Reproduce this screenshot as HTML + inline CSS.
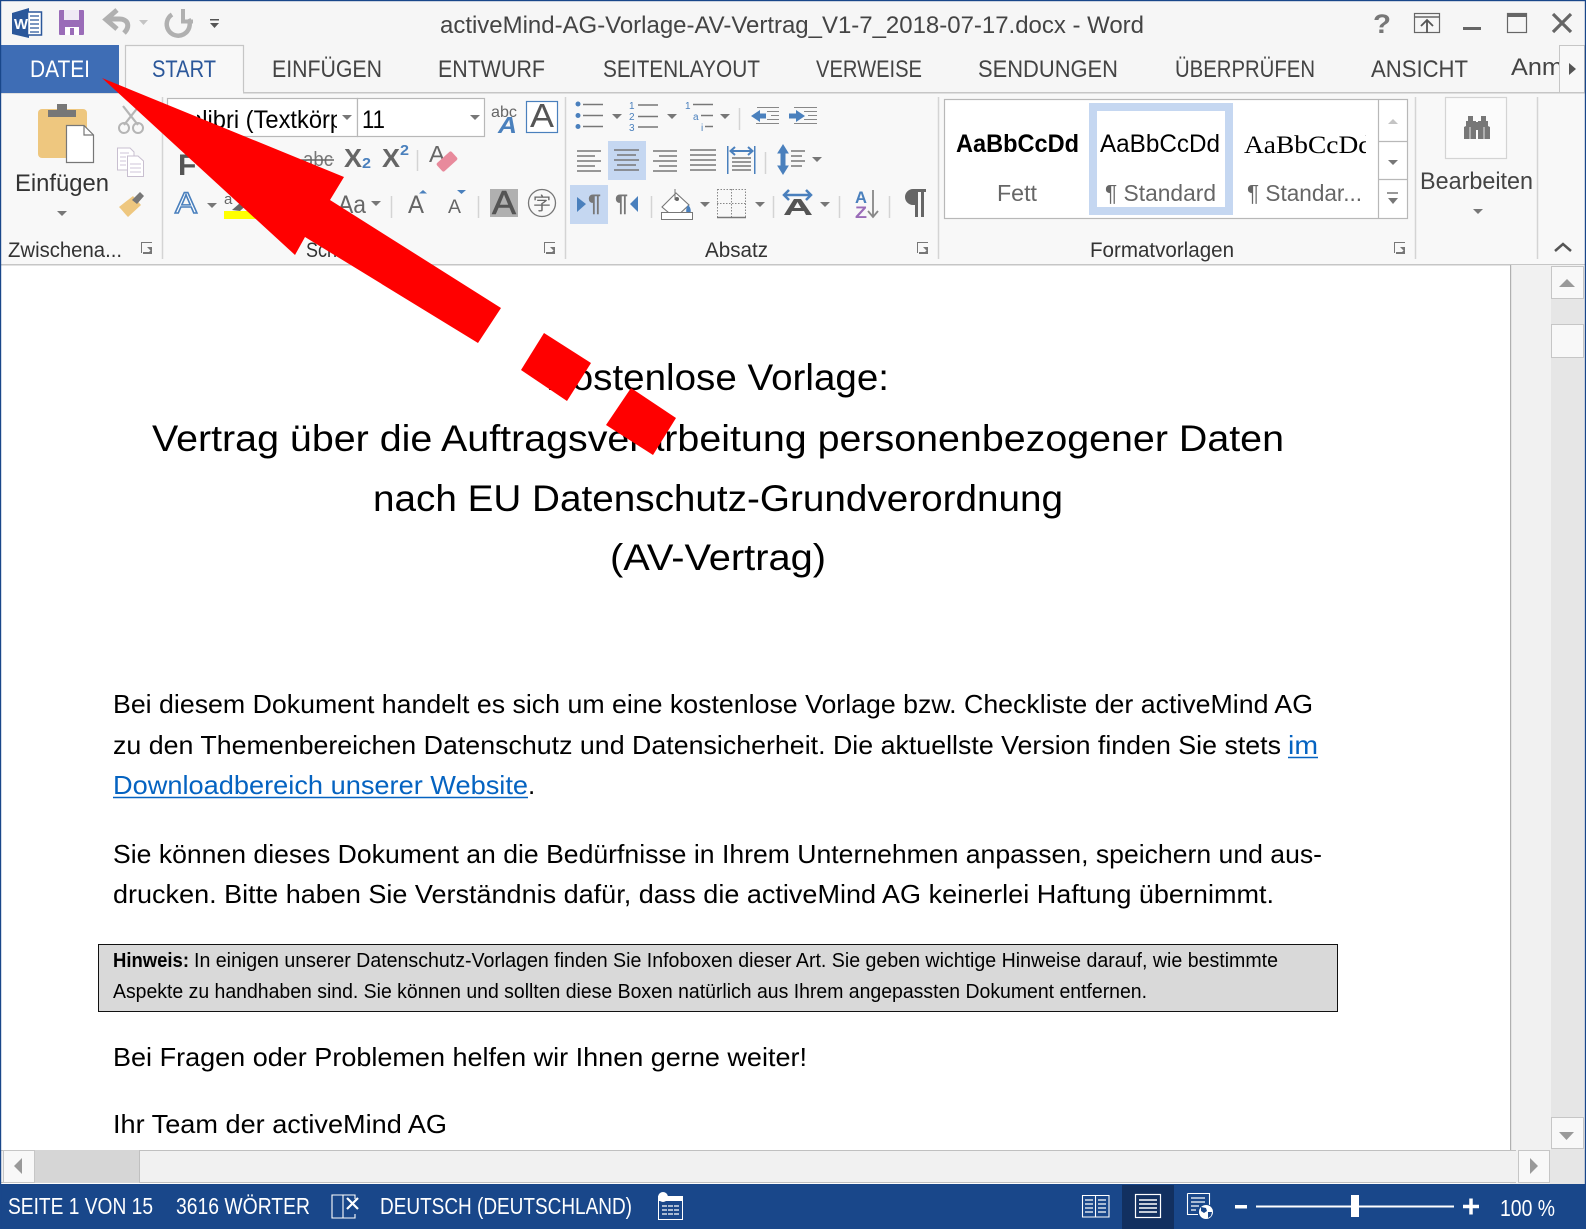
<!DOCTYPE html>
<html lang="de"><head><meta charset="utf-8"><title>activeMind-AG-Vorlage-AV-Vertrag - Word</title>
<style>
html,body{margin:0;padding:0;background:#fff;width:1586px;height:1229px;overflow:hidden}
svg{display:block}
text{font-family:"Liberation Sans",sans-serif;white-space:pre}
.t{font-size:24px;fill:#444}
.g{font-size:21px;fill:#333}
.d{font-size:37px;fill:#000}
.b{font-size:26px;fill:#000}
.h{font-size:20px;fill:#000}
.s{font-size:23px;fill:#fff}
.ln{stroke:#777;stroke-width:1.5;fill:none}
.lt{stroke:#888;stroke-width:1;fill:none}
.bl{fill:#4a80bd}
.dr{fill:#777}
.sep{stroke:#d4d4d4;stroke-width:1.5}
</style></head><body>
<svg width="1586" height="1229" viewBox="0 0 1586 1229" xmlns="http://www.w3.org/2000/svg">
<defs>
<clipPath id="c1"><rect x="197" y="98" width="140" height="38"/></clipPath>
<clipPath id="c2"><rect x="1240" y="120" width="126" height="50"/></clipPath>
</defs>
<rect width="1586" height="1229" fill="#fff"/>
<!-- chrome -->
<rect width="1586" height="93" fill="#f6f6f6"/>
<rect y="93" width="1586" height="172" fill="#f8f8f8"/>
<rect y="92" width="1586" height="1.5" fill="#c6c6c6"/>
<rect y="264" width="1586" height="1.5" fill="#c6c6c6"/>
<!-- QAT -->
<path d="M12 13 29 8V38L12 34Z" fill="#2b579a"/>
<rect x="27.5" y="12" width="14" height="23" fill="#fff" stroke="#2b579a" stroke-width="1.5"/>
<path d="M30 16h9M30 20h9M30 24h9M30 28h9M30 32h9" stroke="#2b579a" stroke-width="1.3"/>
<text x="14" y="29" font-size="15" font-weight="bold" fill="#fff" textLength="14" lengthAdjust="spacingAndGlyphs">W</text>
<rect x="59" y="10" width="25" height="25" rx="1" fill="#9a6cb8"/>
<rect x="64" y="10" width="15" height="10" fill="#efe9f5"/>
<rect x="65" y="27" width="14" height="8" fill="#fff"/>
<rect x="70" y="28" width="4" height="7" fill="#9a6cb8"/>
<path d="M124 33C130 27 129 19 119 19H108" fill="none" stroke="#b0b0b0" stroke-width="5"/>
<path d="M117 10 106 19.500 117 29" fill="none" stroke="#b0b0b0" stroke-width="5"/>
<path d="M139 20h9l-4.500 5z" fill="#c4c4c4"/>
<path d="M172 14.500A11.500 11.500 0 1 0 188.500 19" fill="none" stroke="#b0b0b0" stroke-width="4.500"/>
<path d="M183 9V21.500H193" fill="none" stroke="#b0b0b0" stroke-width="4"/>
<rect x="210" y="19" width="9" height="1.500" fill="#555"/>
<path d="M210 23h9l-4.500 5z" fill="#555"/>
<!-- Title -->
<text x="440" y="33" font-size="24" fill="#444" textLength="704" lengthAdjust="spacingAndGlyphs">activeMind-AG-Vorlage-AV-Vertrag_V1-7_2018-07-17.docx - Word</text>
<text x="1373" y="33" font-size="27" font-weight="bold" fill="#777" textLength="18" lengthAdjust="spacingAndGlyphs">?</text>
<rect x="1414.500" y="13.500" width="25" height="19" fill="none" stroke="#666" stroke-width="1.200"/>
<path d="M1414 17h26" stroke="#666" stroke-width="1.500"/>
<path d="M1427 33V21M1421 26l6-6 6 6" fill="none" stroke="#555" stroke-width="1.800"/>
<rect x="1463" y="27" width="18" height="3" fill="#666"/>
<rect x="1507.500" y="13.500" width="19" height="19" fill="none" stroke="#666" stroke-width="1.200"/>
<rect x="1507" y="13" width="20" height="4" fill="#666"/>
<path d="M1553 14 1571 32M1571 14 1553 32" stroke="#666" stroke-width="3.200"/>
<!-- Tabs -->
<rect x="1" y="45" width="118" height="48" fill="#3e6db5"/>
<path d="M125.500 93V45.500H243.500V93" fill="#f8f8f8" stroke="#c6c6c6" stroke-width="1.200"/>
<rect x="126" y="91" width="117" height="3" fill="#f8f8f8"/>
<text class="t" style="fill:#fff" x="30" y="77" textLength="60" lengthAdjust="spacingAndGlyphs">DATEI</text>
<text class="t" style="fill:#2b579a" x="152" y="77" textLength="64" lengthAdjust="spacingAndGlyphs">START</text>
<text class="t" x="272" y="77" textLength="110" lengthAdjust="spacingAndGlyphs">EINFÜGEN</text>
<text class="t" x="438" y="77" textLength="107" lengthAdjust="spacingAndGlyphs">ENTWURF</text>
<text class="t" x="603" y="77" textLength="157" lengthAdjust="spacingAndGlyphs">SEITENLAYOUT</text>
<text class="t" x="816" y="77" textLength="106" lengthAdjust="spacingAndGlyphs">VERWEISE</text>
<text class="t" x="978" y="77" textLength="140" lengthAdjust="spacingAndGlyphs">SENDUNGEN</text>
<text class="t" x="1175" y="77" textLength="140" lengthAdjust="spacingAndGlyphs">ÜBERPRÜFEN</text>
<text class="t" x="1371" y="77" textLength="97" lengthAdjust="spacingAndGlyphs">ANSICHT</text>
<text class="t" x="1511" y="75" textLength="52" lengthAdjust="spacingAndGlyphs">Anm</text>
<rect x="1559.500" y="45.500" width="25" height="47" fill="#f8f8f8" stroke="#c6c6c6" stroke-width="1"/>
<path d="M1569 63l7 6-7 6z" fill="#555"/>
<!-- Clipboard group -->
<path d="M38 113a4 4 0 0 1 4-4H83a4 4 0 0 1 4 4V158H42a4 4 0 0 1-4-4z" fill="#eec77f"/>
<path d="M48 117V110H57V104H67V110H76V117z" fill="#777"/>
<path d="M66.500 125.500H84L93.500 135V162.500H66.500z" fill="#fff" stroke="#777" stroke-width="1.200"/>
<path d="M84 125.500V135H93.500" fill="none" stroke="#777" stroke-width="1.200"/>
<text class="g" style="font-size:24px" x="15" y="191" textLength="94" lengthAdjust="spacingAndGlyphs">Einfügen</text>
<path d="M57 211h10l-5 5z" class="dr"/>
<path d="M123 106 138 125M139 106 124 125" stroke="#b5b5b5" stroke-width="2.200"/>
<circle cx="124" cy="128" r="5" fill="none" stroke="#b5b5b5" stroke-width="2"/>
<circle cx="138" cy="128" r="5" fill="none" stroke="#b5b5b5" stroke-width="2"/>
<path d="M117.500 148H130L134 152V170H117.500z" fill="#fff" stroke="#c8bfd0"/>
<path d="M127.500 156H138L143.500 161V176.500H127.500z" fill="#fff" stroke="#c8bfd0"/>
<path d="M120 153h9M120 157h6M120 161h6M120 165h6M130 164h11M130 168h11M130 172h11" stroke="#cfc6d8"/>
<path d="M119 207 133 196 141 205 128 217C125 214 122 210 119 207Z" fill="#eec77f"/>
<path d="M132 200 140 192 144 196 137 204z" fill="#777"/>
<text class="g" x="8" y="257" textLength="114" lengthAdjust="spacingAndGlyphs">Zwischena...</text>
<path d="M141 242h11v1h-10v10h-1zM147 247l5 5v-5zM149 252h-6v2h9v-5z" fill="#777"/>
<path class="sep" d="M162.500 97V259"/>
<!-- Font group -->
<rect x="167.500" y="98.500" width="190" height="38" fill="#fff" stroke="#b8b8b8" stroke-width="1.200"/>
<rect x="357.500" y="98.500" width="127" height="38" fill="#fff" stroke="#b8b8b8" stroke-width="1.200"/>
<text clip-path="url(#c1)" x="172" y="128" font-size="25" fill="#000" textLength="200" lengthAdjust="spacingAndGlyphs">Calibri (Textkörper)</text>
<path d="M342 115h10l-5 5z" class="dr"/>
<text x="362" y="128" font-size="25" fill="#000" textLength="23" lengthAdjust="spacingAndGlyphs">11</text>
<path d="M470 115h10l-5 5z" class="dr"/>
<text x="491" y="117" font-size="16" fill="#666" textLength="26" lengthAdjust="spacingAndGlyphs">abc</text>
<text x="498" y="133" font-size="23" font-weight="bold" font-style="italic" fill="#4a80bd" textLength="19" lengthAdjust="spacingAndGlyphs">A</text>
<rect x="526.500" y="101.500" width="31" height="31" fill="#fff" stroke="#4a80bd" stroke-width="1.200"/>
<text x="530" y="127" font-size="33" fill="#555" textLength="24" lengthAdjust="spacingAndGlyphs">A</text>
<text x="178" y="175" font-size="30" font-weight="bold" fill="#555">F</text>
<text x="303" y="166" font-size="20" fill="#777" textLength="30" lengthAdjust="spacingAndGlyphs">abc</text>
<path d="M301 160h33" stroke="#666" stroke-width="1.500"/>
<text x="344" y="167" font-size="26" font-weight="bold" fill="#666" textLength="18" lengthAdjust="spacingAndGlyphs">X</text>
<text x="362" y="168" font-size="15" font-weight="bold" fill="#4a80bd" textLength="9" lengthAdjust="spacingAndGlyphs">2</text>
<text x="382" y="167" font-size="26" font-weight="bold" fill="#666" textLength="18" lengthAdjust="spacingAndGlyphs">X</text>
<text x="400" y="155" font-size="15" font-weight="bold" fill="#4a80bd" textLength="9" lengthAdjust="spacingAndGlyphs">2</text>
<path class="sep" d="M417.500 150V171"/>
<text x="429" y="162" font-size="23" fill="#666" textLength="16" lengthAdjust="spacingAndGlyphs">A</text>
<rect x="437" y="156" width="20" height="11" rx="2" fill="#e88a9c" transform="rotate(-42 447 161.500)"/>
<text x="175" y="213" font-size="30" fill="#fff" stroke="#4a80bd" stroke-width="1.500" textLength="22" lengthAdjust="spacingAndGlyphs">A</text>
<path d="M207 203h10l-5 5z" class="dr"/>
<text x="224" y="204" font-size="15" fill="#666" textLength="12">a</text>
<path d="M232 210 248 196 252 200 240 211z" fill="#666"/>
<rect x="224" y="211" width="36" height="8" fill="#ffff00"/>
<text x="338" y="213" font-size="25" fill="#666" textLength="28" lengthAdjust="spacingAndGlyphs">Aa</text>
<path d="M371 201h10l-5 5z" class="dr"/>
<path class="sep" d="M391.500 196V218"/>
<text x="408" y="213" font-size="25" fill="#666" textLength="16" lengthAdjust="spacingAndGlyphs">A</text>
<path d="M423 190l4 3.500h-8z" class="bl"/>
<text x="448" y="213" font-size="19" fill="#666" textLength="13" lengthAdjust="spacingAndGlyphs">A</text>
<path d="M457 190h9l-4.500 4z" class="bl"/>
<path class="sep" d="M478.500 196V218"/>
<rect x="490" y="189" width="28" height="28" fill="#b0b0b0"/>
<text x="492" y="214" font-size="33" fill="#555" stroke="#555" stroke-width=".6" textLength="24" lengthAdjust="spacingAndGlyphs">A</text>
<circle cx="542" cy="203" r="13.500" fill="none" stroke="#777" stroke-width="1.300"/>
<text x="533" y="210" font-size="18" fill="#666" style="font-family:'Liberation Sans','Noto Sans CJK SC',sans-serif">字</text>
<text class="g" x="306" y="257" textLength="72" lengthAdjust="spacingAndGlyphs">Schriftart</text>
<path d="M544 242h11v1h-10v10h-1zM550 247l5 5v-5zM552 252h-6v2h9v-5z" fill="#777"/>
<path class="sep" d="M565.500 97V259"/>
<!-- Paragraph group -->
<g class="bl"><circle cx="578" cy="104" r="2.500"/><circle cx="578" cy="115.500" r="2.500"/><circle cx="578" cy="126.500" r="2.500"/></g>
<path class="ln" d="M583 104.500h20M583 115.500h20M583 126.500h20"/>
<path d="M612 114h10l-5 5z" class="dr"/>
<g font-size="10" fill="#4a80bd"><text x="629" y="109">1</text><text x="629" y="120">2</text><text x="629" y="131">3</text></g>
<path class="ln" d="M638 105h20M638 116.500h20M638 127h20"/>
<path d="M667 114h10l-5 5z" class="dr"/>
<g font-size="10" fill="#4a80bd"><text x="685" y="109">1</text><text x="693" y="120">a</text><text x="701" y="131">i</text></g>
<path class="ln" d="M693 104.500h20M701 115.500h12M705 126.500h8"/>
<path d="M720 114h10l-5 5z" class="dr"/>
<path class="sep" d="M739.500 108V130"/>
<path class="lt" d="M757 107.500h22M767 111.500h12M771 115.500h8M767 119.500h12M756 123.500h23"/>
<path d="M751 116 760 110V113.500H766V118.500H760V122z" class="bl"/>
<path class="lt" d="M794 107.500h23M804 111.500h13M808 115.500h9M804 119.500h13M794 123.500h23"/>
<path d="M805 116 796 110V113.500H789V118.500H796V122z" class="bl"/>
<rect x="608" y="141" width="38" height="39" fill="#c5d7f1"/>
<path class="ln" d="M577 151h24M577 156h18M577 161h24M577 166h18M577 171h24"/>
<path class="ln" d="M614 150h25M617 155h19M614 160h25M617 165h19M614 170h25"/>
<path class="ln" d="M653 151h24M659 156h18M653 161h24M659 166h18M653 171h24"/>
<path class="ln" d="M690 150h26M690 155h26M690 160h26M690 165h26M690 170h26"/>
<path class="bl" d="M727 146h1.500v28H727zM754 146h1.500v28H754z"/>
<path class="ln" d="M732 158h19M732 162h19M732 166h19M732 170h19"/>
<path d="M731 151h21M735 147l-4.500 4 4.500 4M748 147l4.500 4-4.500 4" fill="none" stroke="#4a80bd" stroke-width="2"/>
<path class="sep" d="M765.500 152V174"/>
<path class="bl" d="M783 145 778 153H781V166H778L783 174 788 166H785V153H788z" stroke="#4a80bd"/>
<path class="ln" d="M791 151h14M791 156h11M791 161h14M791 166h11"/>
<path d="M812 157h10l-5 5z" class="dr"/>
<rect x="570" y="185" width="38" height="39" fill="#c5d7f1"/>
<path class="bl" d="M577 197 586 204 577 212z"/>
<text x="588" y="211" font-size="24" font-weight="bold" fill="#777" textLength="13" lengthAdjust="spacingAndGlyphs">¶</text>
<text x="615" y="211" font-size="24" font-weight="bold" fill="#777" textLength="13" lengthAdjust="spacingAndGlyphs">¶</text>
<path class="bl" d="M638 196 630 204 638 212z"/>
<path class="sep" d="M651.500 196V218"/>
<path d="M662 207 676 193 689 205 675 218z" fill="#fff" stroke="#777" stroke-width="1.100"/>
<path d="M675 189V200" stroke="#777"/><circle cx="677" cy="199" r="2" fill="#666"/>
<path d="M688 205c4 3 3 9 1 12-3-2-4-8-1-12z" class="bl"/>
<rect x="661.500" y="212.500" width="31" height="7" fill="#fff" stroke="#777" stroke-width="1"/>
<path d="M700 202h10l-5 5z" class="dr"/>
<rect x="717.500" y="189.500" width="28" height="28" fill="none" stroke="#888" stroke-width="1" stroke-dasharray="1.500 1.500"/>
<path d="M731.500 189V217M717 203.500h29" stroke="#888" stroke-width="1" stroke-dasharray="1.500 1.500"/>
<path d="M717 217.500h29" stroke="#777" stroke-width="1.500"/>
<path d="M755 202h10l-5 5z" class="dr"/>
<path class="sep" d="M773.500 196V218"/>
<path d="M784 195h27M789 190l-5 5 5 5M806 190l5 5-5 5" fill="none" stroke="#4a80bd" stroke-width="2.500"/>
<path d="M784 215 794 199H801L812 215H806L804 211H792L790 215zM794 208H801L797.500 202z" fill="#555" fill-rule="evenodd"/>
<path d="M820 202h10l-5 5z" class="dr"/>
<path class="sep" d="M839.500 196V218"/>
<text x="855" y="203" font-size="17" font-weight="bold" fill="#4a80bd" textLength="12" lengthAdjust="spacingAndGlyphs">A</text>
<text x="855" y="218" font-size="17" font-weight="bold" fill="#9a6cb8" textLength="12" lengthAdjust="spacingAndGlyphs">Z</text>
<path d="M873 190V217M868 211l5 6 5-6" fill="none" stroke="#888" stroke-width="1.800"/>
<path class="sep" d="M889.500 196V218"/>
<path d="M905 197a8 8 0 0 1 8-8h13v3h-2v25h-3V192h-3v25h-3V205h-2a8 8 0 0 1-8-8z" fill="#666"/>
<text class="g" x="705" y="257" textLength="63" lengthAdjust="spacingAndGlyphs">Absatz</text>
<path d="M917 242h11v1h-10v10h-1zM923 247l5 5v-5zM925 252h-6v2h9v-5z" fill="#777"/>
<path class="sep" d="M938.500 97V259"/>
<!-- Styles gallery -->
<rect x="944.500" y="99.500" width="463" height="119" fill="#fff" stroke="#b8b8b8" stroke-width="1.200"/>
<rect x="1093" y="107" width="136" height="104" fill="#fff" stroke="#c5d7f1" stroke-width="8"/>
<text x="956" y="152" font-size="25" font-weight="bold" fill="#000" textLength="123" lengthAdjust="spacingAndGlyphs">AaBbCcDd</text>
<text x="997" y="201" font-size="23" fill="#666" textLength="40" lengthAdjust="spacingAndGlyphs">Fett</text>
<text x="1100" y="152" font-size="25" fill="#000" textLength="120" lengthAdjust="spacingAndGlyphs">AaBbCcDd</text>
<text x="1105" y="201" font-size="23" fill="#666" textLength="111" lengthAdjust="spacingAndGlyphs">¶ Standard</text>
<g clip-path="url(#c2)"><text x="1244" y="153" font-size="25" fill="#000" style="font-family:'Liberation Serif',serif" textLength="128" lengthAdjust="spacingAndGlyphs">AaBbCcDd</text></g>
<text x="1247" y="201" font-size="23" fill="#666" textLength="115" lengthAdjust="spacingAndGlyphs">¶ Standar...</text>
<path d="M1378.500 100V218M1378 141.500h30M1378 179.500h30" stroke="#b8b8b8" stroke-width="1.200"/>
<path d="M1388 124l5-5 5 5z" fill="#c4c4c4"/>
<path d="M1388 160h10l-5 5z" class="dr"/>
<path d="M1387 193h11" stroke="#777" stroke-width="1.500"/>
<path d="M1388 198h10l-5 6z" class="dr"/>
<text class="g" x="1090" y="257" textLength="144" lengthAdjust="spacingAndGlyphs">Formatvorlagen</text>
<path d="M1394 242h11v1h-10v10h-1zM1400 247l5 5v-5zM1402 252h-6v2h9v-5z" fill="#777"/>
<path class="sep" d="M1415.500 97V259"/>
<!-- Bearbeiten -->
<rect x="1445.500" y="97.500" width="61" height="61" fill="#fbfbfb" stroke="#d4d4d4" stroke-width="1.200"/>
<path d="M1468 116h5v5h3v18h-12v-12l2-1v-5h2zM1481 116h5v5h2v5l2 1v12h-12v-18h3zM1476 122h2v8h-2z" fill="#777"/>
<path d="M1470 127v12M1484 127v12" stroke="#fff" stroke-width=".8"/>
<text x="1420" y="189" font-size="24" fill="#444" textLength="113" lengthAdjust="spacingAndGlyphs">Bearbeiten</text>
<path d="M1473 209h10l-5 5z" class="dr"/>
<path class="sep" d="M1537.500 97V259"/>
<path d="M1555 251 1563 244 1571 251" fill="none" stroke="#555" stroke-width="2.500"/>
<!-- Document -->
<g>
<text class="d" x="546" y="390" textLength="343" lengthAdjust="spacingAndGlyphs">Kostenlose Vorlage:</text>
<text class="d" x="152" y="451" textLength="1132" lengthAdjust="spacingAndGlyphs">Vertrag über die Auftragsverarbeitung personenbezogener Daten</text>
<text class="d" x="373" y="511" textLength="690" lengthAdjust="spacingAndGlyphs">nach EU Datenschutz-Grundverordnung</text>
<text class="d" x="610" y="570" textLength="216" lengthAdjust="spacingAndGlyphs">(AV-Vertrag)</text>
<text class="b" x="113" y="713" textLength="1200" lengthAdjust="spacingAndGlyphs">Bei diesem Dokument handelt es sich um eine kostenlose Vorlage bzw. Checkliste der activeMind AG</text>
<text class="b" x="113" y="754" textLength="1168" lengthAdjust="spacingAndGlyphs">zu den Themenbereichen Datenschutz und Datensicherheit. Die aktuellste Version finden Sie stets</text>
<text class="b" x="1288" y="754" style="fill:#0563c1" textLength="30" lengthAdjust="spacingAndGlyphs">im</text>
<path d="M1288 757.500h30" stroke="#0563c1" stroke-width="1.500"/>
<text class="b" x="113" y="794" style="fill:#0563c1" textLength="415" lengthAdjust="spacingAndGlyphs">Downloadbereich unserer Website</text>
<path d="M113 797.500h415" stroke="#0563c1" stroke-width="1.500"/>
<text class="b" x="528" y="794">.</text>
<text class="b" x="113" y="863" textLength="1209" lengthAdjust="spacingAndGlyphs">Sie können dieses Dokument an die Bedürfnisse in Ihrem Unternehmen anpassen, speichern und aus-</text>
<text class="b" x="113" y="903" textLength="1161" lengthAdjust="spacingAndGlyphs">drucken. Bitte haben Sie Verständnis dafür, dass die activeMind AG keinerlei Haftung übernimmt.</text>
<rect x="98.500" y="944.500" width="1239" height="67" fill="#d9d9d9" stroke="#111" stroke-width="1"/>
<text class="h" x="113" y="967" font-weight="bold" textLength="76" lengthAdjust="spacingAndGlyphs">Hinweis:</text>
<text class="h" x="194" y="967" textLength="1084" lengthAdjust="spacingAndGlyphs">In einigen unserer Datenschutz-Vorlagen finden Sie Infoboxen dieser Art. Sie geben wichtige Hinweise darauf, wie bestimmte</text>
<text class="h" x="113" y="998" textLength="1034" lengthAdjust="spacingAndGlyphs">Aspekte zu handhaben sind. Sie können und sollten diese Boxen natürlich aus Ihrem angepassten Dokument entfernen.</text>
<text class="b" x="113" y="1066" textLength="694" lengthAdjust="spacingAndGlyphs">Bei Fragen oder Problemen helfen wir Ihnen gerne weiter!</text>
<text class="b" x="113" y="1133" textLength="334" lengthAdjust="spacingAndGlyphs">Ihr Team der activeMind AG</text>
</g>
<!-- Scrollbars -->
<rect x="1510" y="265" width="76" height="920" fill="#f1f1f1"/>
<rect x="1510" y="265" width="1.200" height="885" fill="#b0b0b0"/>
<rect x="1551" y="266" width="33" height="884" fill="#e6e6e6"/>
<rect x="1551.500" y="266.500" width="32" height="32" fill="#f8f8f8" stroke="#c6c6c6"/>
<path d="M1559 287l8-8 8 8z" fill="#999"/>
<rect x="1551.500" y="324.500" width="32" height="33" fill="#f8f8f8" stroke="#c6c6c6"/>
<rect x="1551.500" y="1117.500" width="32" height="31" fill="#f8f8f8" stroke="#c6c6c6"/>
<path d="M1559 1132h15l-7.500 8z" fill="#999"/>
<rect x="1" y="1150" width="1515" height="33" fill="#f1f1f1"/>
<rect x="1" y="1150" width="1515" height="1" fill="#c0c0c0"/>
<rect x="1" y="1182" width="1515" height="1" fill="#c0c0c0"/>
<rect x="35" y="1150" width="104" height="33" fill="#d6d6d6"/>
<rect x="139" y="1150" width="1" height="33" fill="#c0c0c0"/>
<rect x="3.500" y="1150.500" width="31" height="32" fill="#f8f8f8" stroke="#c6c6c6"/>
<path d="M22 1158v16l-8-8z" fill="#999"/>
<rect x="1518.500" y="1150.500" width="31" height="32" fill="#f8f8f8" stroke="#c6c6c6"/>
<path d="M1530 1158v16l8-8z" fill="#999"/>
<rect x="1516" y="1150" width="2" height="34" fill="#f1f1f1"/>
<rect x="1550" y="1150" width="36" height="35" fill="#e6e6e6"/>
<!-- Status bar -->
<rect y="1184" width="1586" height="45" fill="#19478a"/>
<text class="s" x="8" y="1214" textLength="145" lengthAdjust="spacingAndGlyphs">SEITE 1 VON 15</text>
<text class="s" x="176" y="1214" textLength="134" lengthAdjust="spacingAndGlyphs">3616 WÖRTER</text>
<path d="M332 1195H343V1218H332zM343 1195H355V1199M343 1218H355V1214" fill="none" stroke="#fff" stroke-width="1.100"/>
<path d="M347 1198 358 1209M358 1198 347 1209" stroke="#fff" stroke-width="2.200"/>
<text class="s" x="380" y="1214" textLength="252" lengthAdjust="spacingAndGlyphs">DEUTSCH (DEUTSCHLAND)</text>
<rect x="658" y="1196" width="25" height="5" fill="#fff"/>
<rect x="658.500" y="1200.500" width="24" height="19" fill="none" stroke="#fff"/>
<circle cx="663" cy="1197" r="5" fill="#fff"/>
<path d="M662 1206h18M662 1210h18M662 1214h18" stroke="#fff" stroke-width="1.300" stroke-dasharray="5 1"/>
<path d="M1082.500 1195.500H1095.500V1217H1082.500zM1095.500 1195.500H1109V1217H1095.500z" fill="none" stroke="#fff" stroke-width="1.100"/>
<path d="M1085 1200h8M1085 1204h8M1085 1208h8M1085 1212h8M1098 1200h8M1098 1204h8M1098 1208h8M1098 1212h8" stroke="#fff" stroke-width="1.300"/>
<rect x="1122" y="1185" width="52" height="44" fill="#123060"/>
<rect x="1135.500" y="1194.500" width="25" height="23" fill="none" stroke="#fff" stroke-width="1.200"/>
<path d="M1139 1200h18M1139 1204h18M1139 1208h18M1139 1212h18" stroke="#fff" stroke-width="1.500"/>
<path d="M1187.500 1193.500H1209.500V1205M1187.500 1193.500V1214.500H1198" fill="none" stroke="#fff" stroke-width="1.100"/>
<path d="M1191 1198h14M1191 1202h14M1191 1206h8M1191 1210h5" stroke="#fff" stroke-width="1.300"/>
<circle cx="1206" cy="1212" r="8" fill="#19478a"/>
<circle cx="1206" cy="1212" r="7" fill="#fff"/>
<path d="M1201 1207l5 1 1 3-3 2-3-2zM1208 1212l4 0-1 4-3 2z" fill="#19478a"/>
<rect x="1235" y="1205" width="12" height="3.500" fill="#fff"/>
<rect x="1256" y="1205.500" width="198" height="2" fill="#fff"/>
<rect x="1351" y="1195" width="8" height="22" fill="#fff"/>
<path d="M1463 1206.500h16M1471 1198.500v16" stroke="#fff" stroke-width="3.500"/>
<text class="s" x="1500" y="1216" textLength="55" lengthAdjust="spacingAndGlyphs">100 %</text>
<!-- Window border -->
<rect width="1586" height="1.200" fill="#19478a"/>
<rect width="1.200" height="1229" fill="#19478a"/>
<rect x="1584.800" width="1.200" height="1229" fill="#19478a"/>
<!-- Red arrow -->
<path d="M102 78 344 177 330 200 501 308 478 343 305 237 295 255Z" fill="#f00"/>
<path d="M544 333 591 363 567 401 521 370Z" fill="#f00"/>
<path d="M631 388 676 418 653 455 606 425Z" fill="#f00"/>
</svg>
</body></html>
